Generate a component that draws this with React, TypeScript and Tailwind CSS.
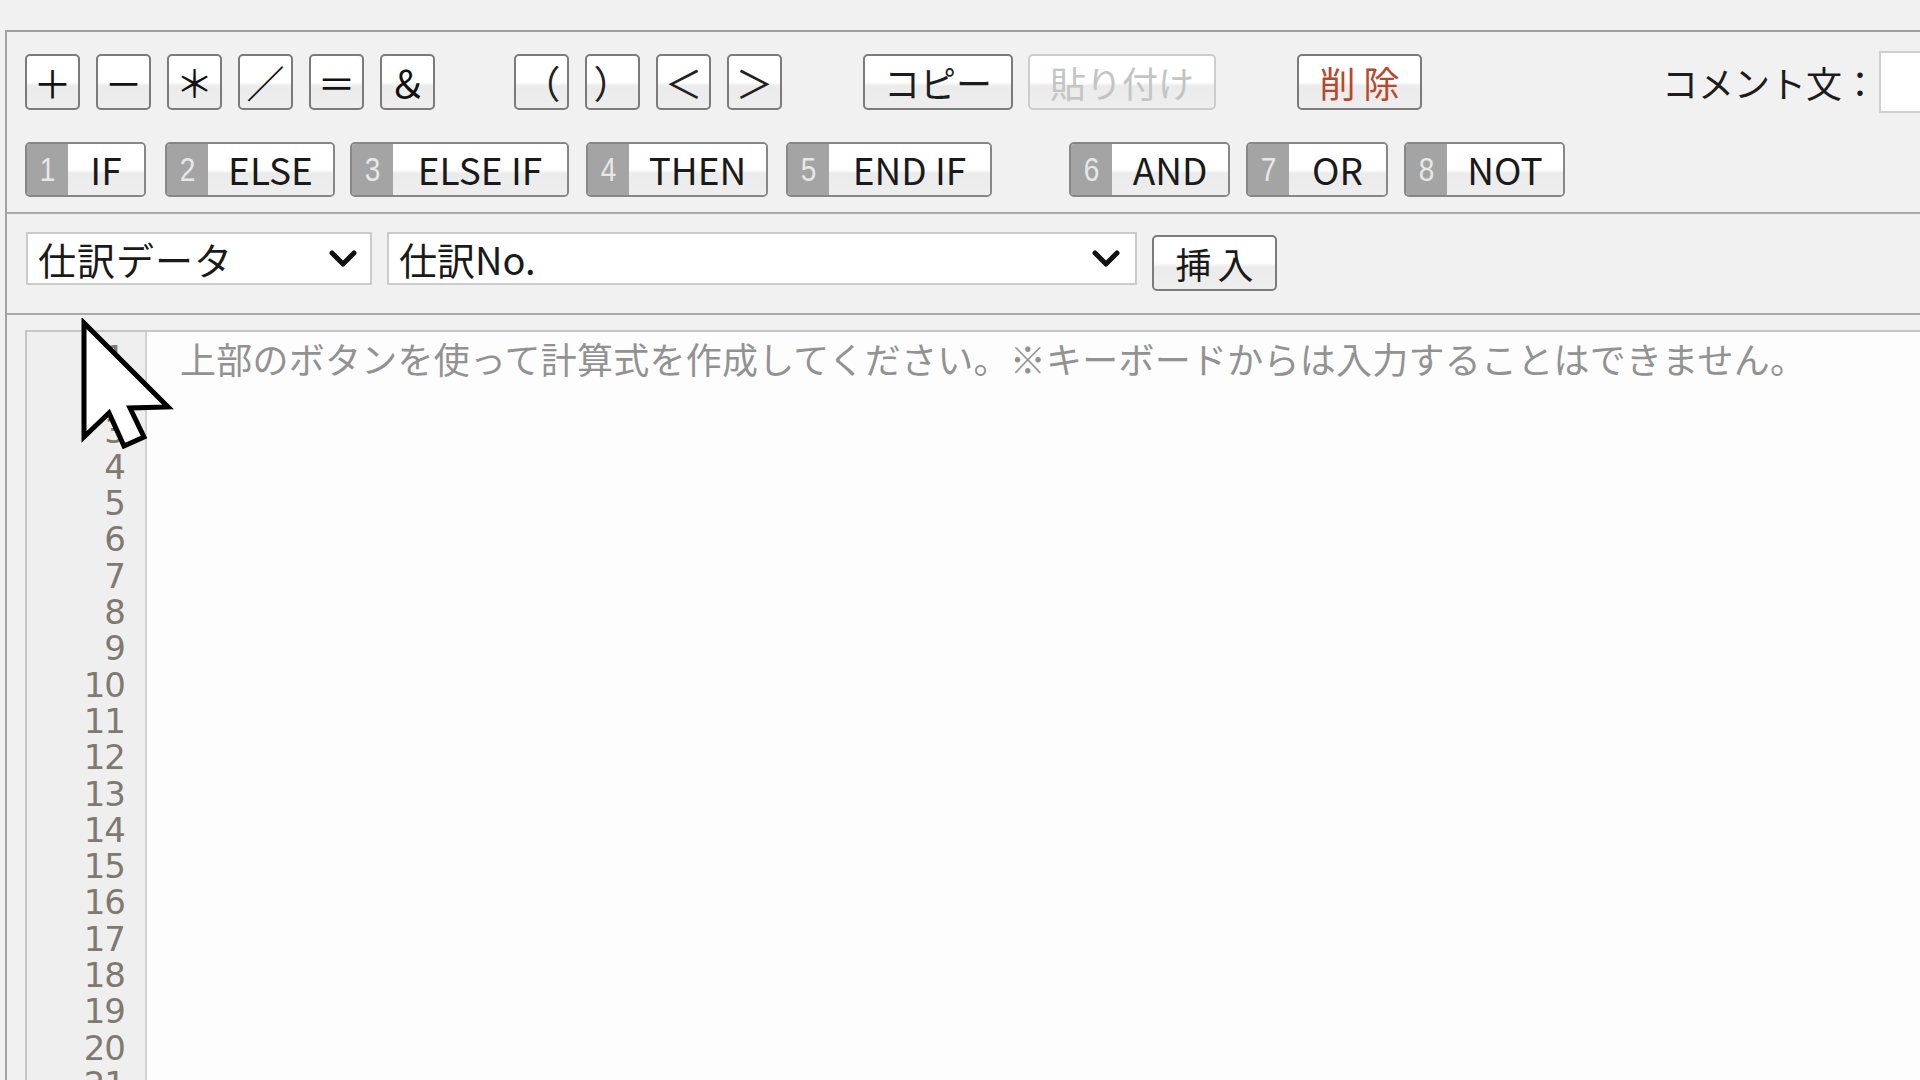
import React from "react";

const JP = "font-['Noto_Sans_CJK_JP','Noto_Sans',sans-serif]";

const btnFace =
  "bg-[linear-gradient(to_bottom,#ffffff_0%,#ffffff_50%,#ebebeb_58%,#eeeeee_100%)]";

function Btn({ children, className = "" }: { children: React.ReactNode; className?: string }) {
  return (
    <div
      className={`shrink-0 flex items-center justify-center rounded-[5px] border-2 ${btnFace} ${className}`}
    >
      {children}
    </div>
  );
}

const symbolsA = ["＋", "－", "＊", "／", "＝", "＆"];
const symbolsB = ["（", "）", "＜", "＞"];

const keywords = [
  { n: "1", label: "IF", cls: "w-[121px]" },
  { n: "2", label: "ELSE", cls: "w-[170px] ml-[19px]" },
  { n: "3", label: "ELSE IF", cls: "w-[219px] ml-[15px]" },
  { n: "4", label: "THEN", cls: "w-[182px] ml-[17px]" },
  { n: "5", label: "END IF", cls: "w-[206px] ml-[18px]" },
  { n: "6", label: "AND", cls: "w-[161px] ml-[77px]" },
  { n: "7", label: "OR", cls: "w-[142px] ml-[16px]" },
  { n: "8", label: "NOT", cls: "w-[161px] ml-[16px]" },
];

function Chevron({ className = "" }: { className?: string }) {
  return (
    <svg viewBox="0 0 30 20" className={className} fill="none">
      <path d="M4 4 L15 15 L26 4" stroke="#111" strokeWidth="5" strokeLinecap="round" strokeLinejoin="round" />
    </svg>
  );
}

export default function App() {
  const lines = Array.from({ length: 21 }, (_, i) => i + 1);
  return (
    <div className={`relative w-[1920px] h-[1080px] overflow-hidden bg-[#f1f1f1] ${JP}`}>
      <div className="ml-[5px] mt-[30px] h-[1050px] flex flex-col border-l-2 border-t-2 border-[#a2a2a2]">
        {/* operator and keyword toolbar */}
        <div className="pl-[18px] pt-[22px] pb-[15px] border-b-2 border-[#a9a9a9]">
          <div className="flex items-center h-[56px]">
            <div className="flex gap-[16px]">
              {symbolsA.map((s) => (
                <Btn key={s} className="w-[55px] h-[56px] border-[#7b7b7b] text-[38px] leading-none text-[#111]">
                  {s}
                </Btn>
              ))}
            </div>
            <div className="flex gap-[16px] ml-[79px]">
              {symbolsB.map((s) => (
                <Btn key={s} className="w-[55px] h-[56px] border-[#7b7b7b] text-[38px] leading-none text-[#222]">
                  {s}
                </Btn>
              ))}
            </div>
            <Btn className="ml-[81px] w-[150px] h-[56px] border-[#7b7b7b] text-[36px] leading-none text-[#1c1c1c]">
              コピー
            </Btn>
            <Btn className="ml-[15px] w-[188px] h-[56px] border-[#cdcdcd] text-[36px] leading-none text-[#c4c4c4]">
              貼り付け
            </Btn>
            <Btn className="ml-[81px] w-[125px] h-[56px] border-[#7b7b7b] text-[36px] leading-none text-[#b8482c] tracking-[8px] pl-[8px]">
              削除
            </Btn>
            <div className="shrink-0 ml-[240px] w-[216px] text-[36px] leading-none text-[#1c1c1c]">コメント文：</div>
            <div className="shrink-0 ml-[1px] w-[120px] h-[62px] bg-white border-2 border-[#cfcfcf]" />
          </div>
          <div className="flex mt-[32px] h-[55px]">
            {keywords.map((k) => (
              <div
                key={k.n}
                className={`shrink-0 h-[55px] flex rounded-[5px] border-2 border-[#878787] overflow-hidden ${k.cls}`}
              >
                <div className="w-[41px] shrink-0 bg-[#a4a4a4] flex items-center justify-center text-[28px] leading-none text-[#e8e8e8] font-['Liberation_Sans',sans-serif]">
                  <span className="inline-block scale-y-[1.2]">{k.n}</span>
                </div>
                <div
                  className={`flex-1 flex items-center justify-center text-[37px] leading-none text-[#1a1a1a] ${btnFace}`}
                >
                  {k.label}
                </div>
              </div>
            ))}
          </div>
        </div>

        {/* field picker */}
        <div className="pl-[19px] pt-[18px] pb-[22px] border-b-2 border-[#a9a9a9]">
          <div className="flex items-start h-[59px]">
            <div className="shrink-0 w-[346px] h-[53px] bg-white border-2 border-[#cbcbcb] flex items-center pl-[10px] pr-[12px]">
              <span className="flex-1 text-[38px] leading-none text-[#1a1a1a] tracking-[1px]">仕訳データ</span>
              <Chevron className="w-[30px] h-[20px]" />
            </div>
            <div className="shrink-0 ml-[15px] w-[750px] h-[53px] bg-white border-2 border-[#cbcbcb] flex items-center pl-[10px] pr-[14px]">
              <span className="flex-1 text-[38px] leading-none text-[#1a1a1a]">仕訳No.</span>
              <Chevron className="w-[30px] h-[20px]" />
            </div>
            <Btn className="ml-[15px] mt-[3px] w-[125px] h-[56px] border-[#7b7b7b] text-[36px] leading-none text-[#1a1a1a] tracking-[6px] pl-[6px]">
              挿入
            </Btn>
          </div>
        </div>

        {/* formula editor */}
        <div className="flex-1 pl-[18px] pt-[15px] min-h-0">
          <div className="h-full flex border-t-2 border-l-2 border-[#c6c6c6] bg-[#fdfdfd] overflow-hidden">
            <div className="shrink-0 w-[120px] bg-[#efefef] border-r-2 border-[#d2d2d2] pt-[8px] pr-[20px] text-right font-['DejaVu_Sans',sans-serif] text-[34px] leading-[36.3px] tracking-[-1px] text-[#807970]">
              {lines.map((n) => (
                <div key={n} className="h-[36.3px]">
                  {n}
                </div>
              ))}
            </div>
            <div className="flex-1 pl-[33px] pt-[8px] text-[36px] leading-[36.3px] tracking-[0.25px] text-[#929292] whitespace-nowrap">
              上部のボタンを使って計算式を作成してください。※キーボードからは入力することはできません。
            </div>
          </div>
        </div>
      </div>

      {/* mouse pointer */}
      <svg className="absolute left-[78px] top-[318px] w-[100px] h-[135px]" viewBox="0 0 100 135">
        <polygon
          points="6,5 6,119 31,95 46,128 66,119 52,90 90,89"
          fill="#ffffff"
          stroke="#000000"
          strokeWidth="5"
          strokeLinejoin="miter"
        />
      </svg>
    </div>
  );
}
